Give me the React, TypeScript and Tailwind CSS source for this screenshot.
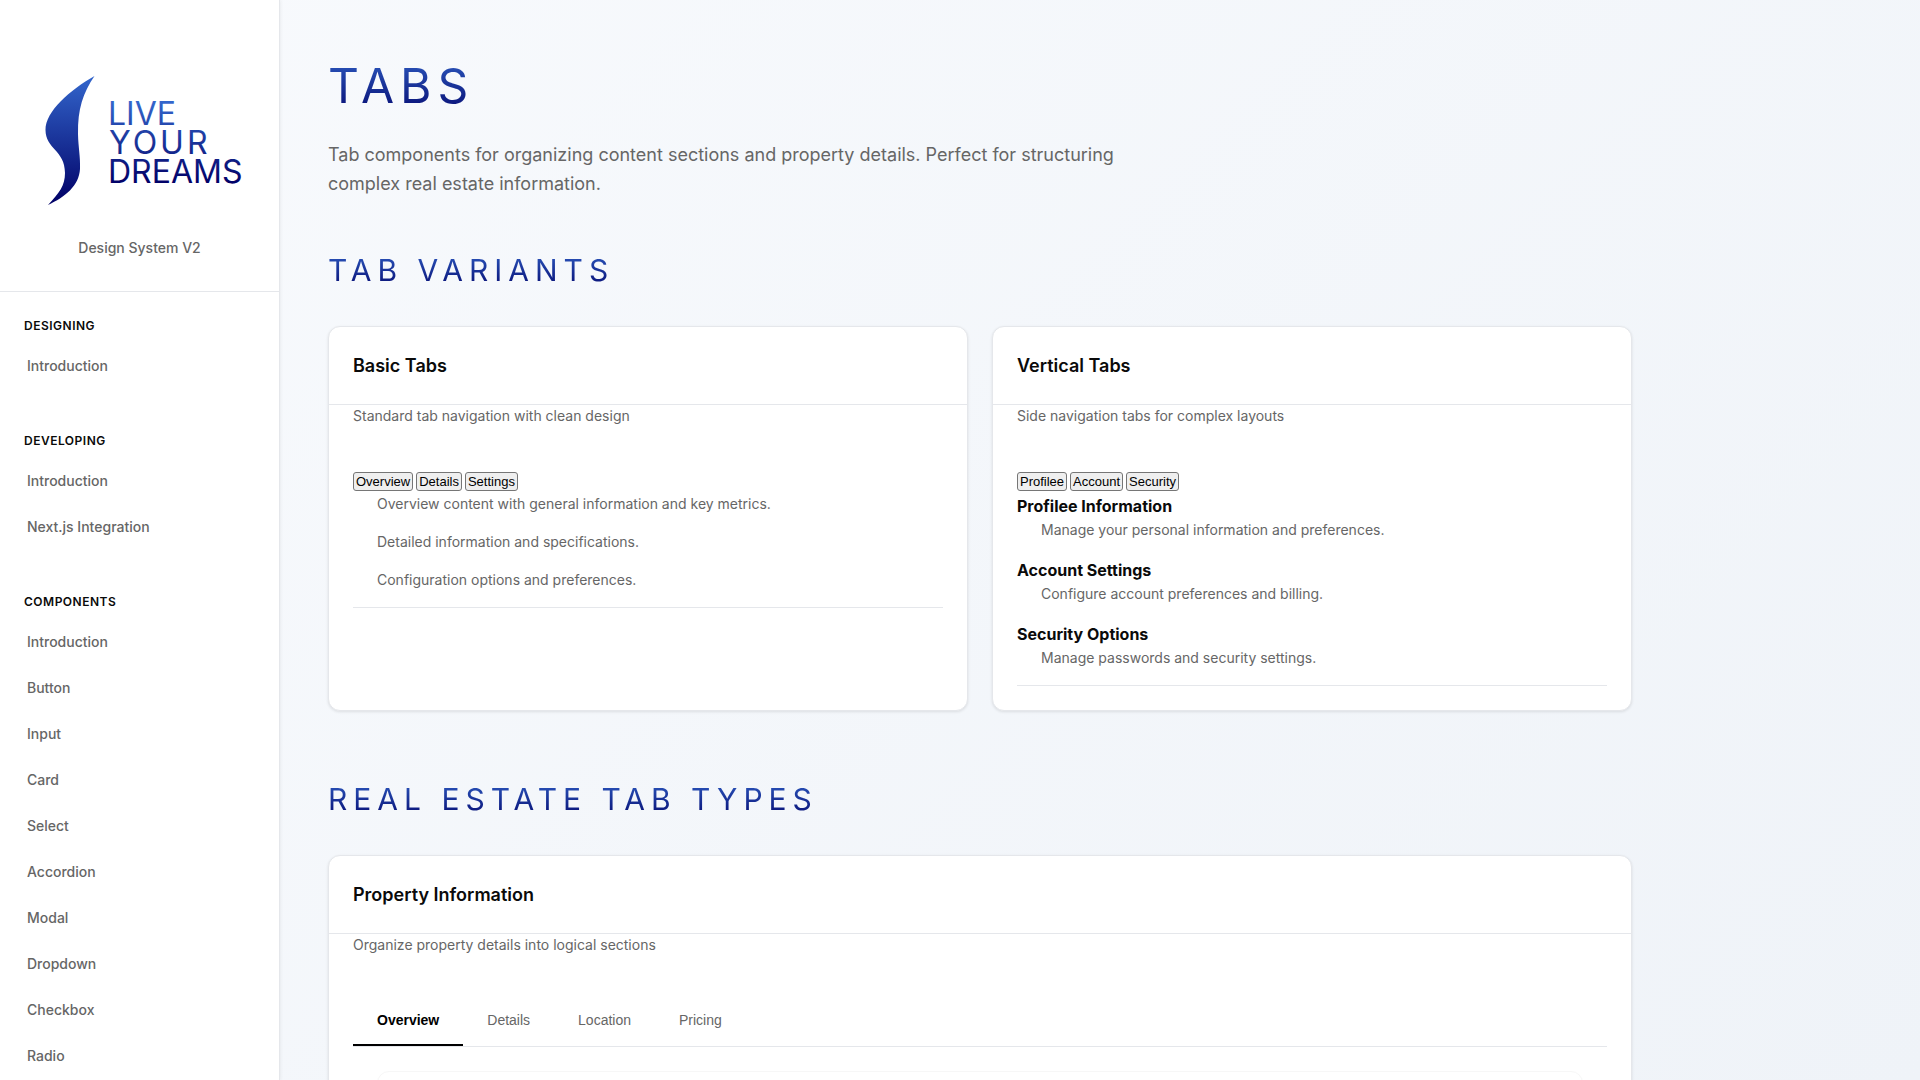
import type { ReactNode } from "react";

const navGroups = [
  { title: "Designing", items: ["Introduction"] },
  { title: "Developing", items: ["Introduction", "Next.js Integration"] },
  {
    title: "Components",
    items: ["Introduction", "Button", "Input", "Card", "Select", "Accordion", "Modal", "Dropdown", "Checkbox", "Radio"],
  },
];

function Logo() {
  return (
    <svg viewBox="-7 0 204 130" className="h-[130px] w-[204px]" role="img" aria-label="Live Your Dreams">
      <defs>
        <linearGradient id="mark" x1="0" y1="0" x2="0" y2="1">
          <stop offset="0" stopColor="#3366cc" />
          <stop offset="1" stopColor="#000066" />
        </linearGradient>
        <linearGradient id="word" gradientUnits="userSpaceOnUse" x1="0" y1="26" x2="0" y2="108">
          <stop offset="0" stopColor="#3366cc" />
          <stop offset="1" stopColor="#000066" />
        </linearGradient>
      </defs>
      <path
        d="M49.500 0C38 17 32.500 33 33 58C33.300 72 35.500 80 35 93C34 110 20 121 3 129C14 117 20 110 20 97C20 74 0.500 73 0.500 54C0.500 35 25 14 49.500 0Z"
        fill="url(#mark)"
      />
      <g fill="url(#word)" fontFamily="Inter, sans-serif" fontSize="32">
        <text x="63" y="49">LIVE</text>
        <text x="64" y="78" letterSpacing="3">YOUR</text>
        <text x="63" y="107">DREAMS</text>
      </g>
    </svg>
  );
}

function Sidebar() {
  return (
    <aside className="w-[280px] shrink-0 border-r border-[#e5e7eb] bg-white shadow-[1px_0_3px_rgba(0,0,0,0.05)]">
      <div className="flex flex-col items-center border-b border-[#e5e7eb] px-6 pt-[76px] pb-8">
        <Logo />
        <p className="mt-[31px] text-sm leading-[22px] font-medium text-[#666]">Design System V2</p>
      </div>
      <nav className="flex flex-col gap-[43px] px-6 pt-[25px]">
        {navGroups.map((group) => (
          <section key={group.title}>
            <h3 className="text-xs leading-[18px] font-semibold tracking-[0.5px] text-[#0a0a0a] uppercase">
              {group.title}
            </h3>
            <ul className="mt-2">
              {group.items.map((item) => (
                <li key={item}>
                  <a href="#" className="block px-[3px] py-3 text-sm leading-[22px] font-medium text-[#666]">
                    {item}
                  </a>
                </li>
              ))}
            </ul>
          </section>
        ))}
      </nav>
    </aside>
  );
}

function SectionTitle({ children }: { children: ReactNode }) {
  return (
    <h2 className="w-fit bg-linear-to-b/srgb from-[#3366cc] to-[#000066] bg-clip-text text-[30px] leading-[48px] tracking-[6px] text-transparent uppercase [font-optical-sizing:none]">
      {children}
    </h2>
  );
}

function Card({ title, description, children }: { title: string; description: string; children: ReactNode }) {
  return (
    <article className="rounded-xl border border-[#e5e7eb] bg-white shadow-[0_1px_3px_rgba(0,0,0,0.1)]">
      <header className="border-b border-[#e5e7eb] px-6 py-6">
        <h3 className="text-lg leading-[29px] font-semibold text-[#0a0a0a]">{title}</h3>
      </header>
      <div className="px-6 pb-6">
        <p className="text-sm leading-[22px] text-[#666]">{description}</p>
        {children}
      </div>
    </article>
  );
}

function PlainTabs({ labels }: { labels: string[] }) {
  return (
    <div className="mt-[45px] flex gap-[3px]" role="tablist">
      {labels.map((label) => (
        <button
          key={label}
          type="button"
          role="tab"
          className="rounded-[3px] border border-[#767676] bg-[#efefef] px-0.5 py-px font-['Liberation_Sans',Arial,sans-serif] text-[13px] leading-[15px] text-black"
        >
          {label}
        </button>
      ))}
    </div>
  );
}

function PanelText({ children }: { children: ReactNode }) {
  return <p className="mb-4 pl-6 text-sm leading-[22px] text-[#666]">{children}</p>;
}

function PanelHeading({ children }: { children: ReactNode }) {
  return <h4 className="text-base leading-[26px] font-bold text-[#0a0a0a]">{children}</h4>;
}

export default function App() {
  return (
    <div className="flex h-screen overflow-hidden bg-linear-135/srgb from-[#f8fafd] to-[#eff3f8] font-[Inter,sans-serif]">
      <Sidebar />
      <main className="min-w-0 grow px-12 pt-12">
        <div className="max-w-[1304px]">
          <h1 className="w-fit bg-linear-to-b/srgb from-[#3366cc] to-[#000066] bg-clip-text text-5xl leading-[75px] tracking-[6px] text-transparent uppercase [font-optical-sizing:none]">
            Tabs
          </h1>
          <p className="mt-[17px] max-w-[800px] text-lg leading-[29px] text-[#666]">
            Tab components for organizing content sections and property details. Perfect for structuring complex real
            estate information.
          </p>

          <section className="mt-12">
            <SectionTitle>Tab Variants</SectionTitle>
            <div className="mt-8 grid grid-cols-2 gap-6">
              <Card title="Basic Tabs" description="Standard tab navigation with clean design">
                <PlainTabs labels={["Overview", "Details", "Settings"]} />
                <div className="border-b border-[#e5e7eb] pt-0.5">
                  <PanelText>Overview content with general information and key metrics.</PanelText>
                  <PanelText>Detailed information and specifications.</PanelText>
                  <PanelText>Configuration options and preferences.</PanelText>
                </div>
              </Card>
              <Card title="Vertical Tabs" description="Side navigation tabs for complex layouts">
                <PlainTabs labels={["Profilee", "Account", "Security"]} />
                <div className="border-b border-[#e5e7eb] pt-0.5">
                  <PanelHeading>Profilee Information</PanelHeading>
                  <PanelText>Manage your personal information and preferences.</PanelText>
                  <PanelHeading>Account Settings</PanelHeading>
                  <PanelText>Configure account preferences and billing.</PanelText>
                  <PanelHeading>Security Options</PanelHeading>
                  <PanelText>Manage passwords and security settings.</PanelText>
                </div>
              </Card>
            </div>
          </section>

          <section className="mt-16">
            <SectionTitle>Real Estate Tab Types</SectionTitle>
            <div className="mt-8">
              <Card title="Property Information" description="Organize property details into logical sections">
                <div
                  className="mt-10 flex border-b border-[#e5e7eb] font-['Liberation_Sans',Arial,sans-serif] text-sm leading-4"
                  role="tablist"
                >
                  {["Overview", "Details", "Location", "Pricing"].map((label, index) => (
                    <button
                      key={label}
                      type="button"
                      role="tab"
                      aria-selected={index === 0}
                      className="border-b-2 border-transparent px-6 py-4 text-[#666] aria-selected:border-black aria-selected:font-bold aria-selected:text-black"
                    >
                      {label}
                    </button>
                  ))}
                </div>
                <div className="px-6 pt-6">
                  <div className="h-40 rounded-xl border border-[#f7f7f7] bg-white" />
                </div>
              </Card>
            </div>
          </section>
        </div>
      </main>
    </div>
  );
}
